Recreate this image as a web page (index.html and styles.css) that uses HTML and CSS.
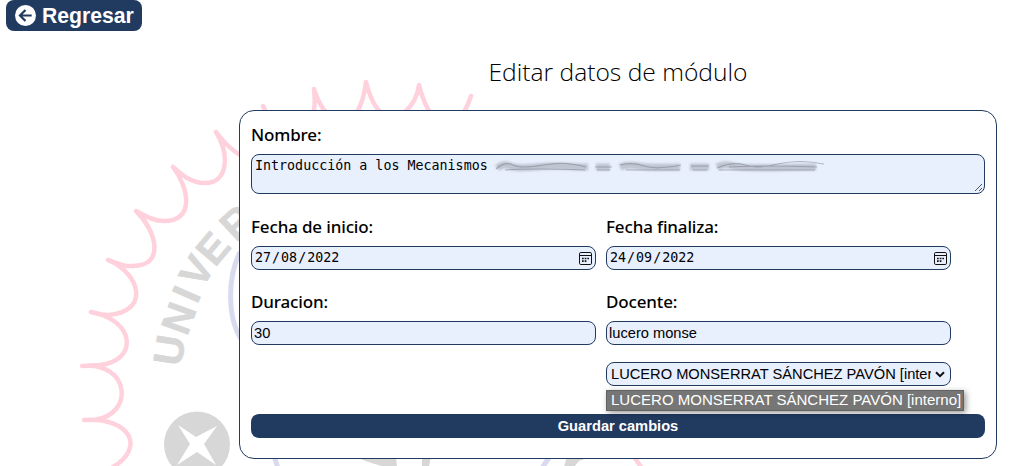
FILE: index.html
```html
<!DOCTYPE html>
<html lang="es">
<head>
<meta charset="utf-8">
<title>Editar datos de módulo</title>
<link rel="stylesheet" href="styles.css">
</head>
<body>
<svg class="seal" viewBox="0 0 1026 466" aria-hidden="true">
  <g class="seal-edge">
    <path d="M471 96Q466 112 455 124Q430 129 419 85Q417 101 405 112Q378 129 366 82Q364 100 357 112Q328 133 314 89Q316 108 312 117Q280 142 263 106M240 155Q228 148 216 132C230 155 228 183 205 183C191 183 182 175 173 167C189 188 195 221 164 221C152 221 144 215 136 211C156 230 166 266 133 266C123 267 117 263 108 260C141 274 150 312 108 315Q100 315 91 312C136 320 138 361 100 365L82 366C130 361 135 415 94 420L84 420C130 417 146 447 113 467"/>
    <path d="M634 457L642 468"/>
  </g>
  <g class="seal-ring"><path d="M240 252C227 278 227 320 243 342M274 456L278 468M550 456L542 468"/></g>
  <g class="seal-word">
    <text transform="translate(181 367) rotate(-81)">U</text>
    <text transform="translate(187 337) rotate(-70)">N</text>
    <text transform="translate(197 305) rotate(-66)">I</text>
    <text transform="translate(202 290) rotate(-60)">V</text>
    <text transform="translate(215 268) rotate(-50)">E</text>
    <text transform="translate(236 243) rotate(-43)">R</text>
  </g>
  <g class="seal-fill">
    <circle cx="197" cy="444.500" r="33"/>
    <path d="M355 456H396L397 467H386Q365 462 355 456ZM422 456H431L429 467H422ZM567 456H593L579 461L574 467H564Z"/>
  </g>
  <path class="seal-star" d="M178 425L196 437L217 426L204 444L216 465L197 452L177 465L190 444Z"/>
</svg>

<button class="back" type="button">
  <svg class="back-icon" viewBox="0 0 22 22" aria-hidden="true"><circle cx="11" cy="11" r="11"/><path d="M17.500 11H6M11 5.200L5.200 11L11 16.800"/></svg>
  <span>Regresar</span>
</button>

<main class="page">
  <h1 class="title"><span>Editar datos de módulo</span></h1>
  <form class="card">
    <label class="label label-name">Nombre:</label>
    <div class="control name-box">
      <span>Introducción a los Mecanismos</span>
      <svg class="smudge" viewBox="0 0 332 16" aria-hidden="true">
        <path class="smudge-wide" d="M4 10Q11 5 17 8T43 9T83 9H95M103 9H117M127 9Q135 6 145 8T187 9M197 9H216M224 9Q232 5 240 8T323 9"/>
        <path class="smudge-line" d="M3 11Q12 3 20 7T50 7T93 9M12 12Q40 10 92 12M102 9H119M104 12H117M127 7Q139 4 151 8T188 7M133 12H187M198 8H216M200 12H214M224 10Q240 3 252 7T285 6T331 6M226 12H322M236 9Q280 7 324 9"/>
      </svg>
      <svg class="grip" viewBox="0 0 9 9" aria-hidden="true"><path d="M1 8L8 1M5 8L8 5"/></svg>
    </div>
    <div class="fields">
      <div class="field">
        <label class="label">Fecha de inicio:</label>
        <div class="control date"><span>27<i>/</i>08<i>/</i>2022</span>
          <svg class="calendar" viewBox="0 0 13 13" aria-hidden="true"><rect x=".5" y=".5" width="12" height="12" rx="1.300"/><path d="M1 3.500H12"/><path class="dots" d="M3 6.500H10M3 9.200H8"/></svg>
        </div>
      </div>
      <div class="field">
        <label class="label">Fecha finaliza:</label>
        <div class="control date"><span>24<i>/</i>09<i>/</i>2022</span>
          <svg class="calendar" viewBox="0 0 13 13" aria-hidden="true"><rect x=".5" y=".5" width="12" height="12" rx="1.300"/><path d="M1 3.500H12"/><path class="dots" d="M3 6.500H10M3 9.200H8"/></svg>
        </div>
      </div>
      <div class="field">
        <label class="label">Duracion:</label>
        <div class="control text">30</div>
      </div>
      <div class="field">
        <label class="label">Docente:</label>
        <div class="control text">lucero monse</div>
        <div class="control select">
          <span class="select-value">LUCERO MONSERRAT SÁNCHEZ PAVÓN [interno]</span>
          <svg class="chevron" viewBox="0 0 10 7" aria-hidden="true"><path d="M1 1.200L5 5.200L9 1.200"/></svg>
          <div class="option"><span>LUCERO MONSERRAT SÁNCHEZ PAVÓN [interno]</span></div>
        </div>
      </div>
    </div>
    <button class="save" type="button">Guardar cambios</button>
  </form>
</main>
</body>
</html>
```
FILE: styles.css
```css
* { box-sizing: border-box; }
body {
  margin: 0;
  height: 466px;
  overflow: hidden;
  position: relative;
  background: #fff;
  color: #000;
  font-family: "Liberation Sans", Arial, sans-serif;
}
.seal { position: absolute; inset: 0; width: 1026px; height: 466px; z-index: -1; }
.seal-edge { fill: none; stroke: #ffd1dc; stroke-width: 4.5; stroke-linejoin: round; stroke-linecap: round; }
.seal-ring { fill: none; stroke: #dadaef; stroke-width: 5; }
.seal-word { fill: #d7d7d7; stroke: #d7d7d7; stroke-width: .6; font: bold 41px "Liberation Sans", sans-serif; }
.seal-fill { fill: #d7d7d7; }
.seal-star { fill: #fff; }
.back {
  display: flex;
  align-items: center;
  gap: 6px;
  width: 136px;
  height: 31px;
  margin-left: 6px;
  padding: 0 0 0 9px;
  border: 0;
  border-radius: 8px;
  background: #213a5f;
  color: #fff;
  font: bold 21.2px "Liberation Sans", Arial, sans-serif;
}
.back-icon { width: 21px; height: 21px; fill: #fff; flex: none; }
.back-icon path { fill: none; stroke: #213a5f; stroke-width: 2.3; }
.page { width: 758px; margin-left: 239px; }
.title {
  height: 79px;
  margin: 0;
  padding-top: 24px;
  text-align: center;
  font: 300 24.6px/34px "Open Sans", "Noto Sans", sans-serif;
}
.card {
  height: 349px;
  padding: 11px 11px 0;
  border: 1px solid #213a5f;
  border-radius: 15px;
  background: #fff;
}
.label { display: block; height: 33px; font: 500 17px/26px "Noto Sans", sans-serif; letter-spacing: -.15px; }
.label-name { height: 32px; }
.control {
  display: flex;
  height: 24px;
  border: 1px solid #213a5f;
  border-radius: 8px;
  background: #e8effd;
  position: relative;
}
.name-box { height: 40px; padding: 3px 3px; font: 13.33px/16px "DejaVu Sans Mono", monospace; white-space: nowrap; }
.smudge { width: 332px; height: 16px; margin-left: 5px; overflow: visible; fill: none; }
.smudge-wide { stroke: #a9afba; stroke-width: 7; filter: blur(1.3px); opacity: .65; }
.smudge-line { stroke: #7e838e; stroke-width: 1.2; filter: blur(.7px); opacity: .55; }
.grip { position: absolute; right: 1px; bottom: 1px; width: 9px; height: 9px; fill: none; stroke: #555; stroke-width: 1; }
.fields { display: grid; grid-template-columns: 345px 345px; column-gap: 10px; padding-top: 20px; }
.field { height: 75px; }
.field .label { height: 32px; }
.date { align-items: center; justify-content: space-between; padding: 0 3px; font: 13.33px/20px "DejaVu Sans Mono", monospace; }
.date i { font-style: normal; padding: 0 1px; }
.calendar { width: 13px; height: 13px; fill: none; stroke: #111; stroke-width: 1; }
.calendar .dots { stroke-width: 1.7; stroke-dasharray: 1.7 1; }
.text { align-items: center; padding: 0 2px; font-size: 14.67px; }
.select {
  align-items: center;
  margin-top: 17px;
  padding: 0 5px 0 4px;
  justify-content: space-between;
  font-size: 14.67px;
  white-space: nowrap;
}
.select-value { width: 320px; overflow: hidden; }
.chevron { width: 10px; height: 7px; flex: none; fill: none; stroke: #111; stroke-width: 2; }
.option {
  position: absolute;
  z-index: 2;
  top: 27px;
  left: -1px;
  width: 358px;
  height: 21px;
  padding-left: 4px;
  border: 1px solid #626262;
  background: #767676;
  color: #fff;
  font-size: 15.02px;
  line-height: 18px;
  box-shadow: 2px 2px 6px rgba(0, 0, 0, .4);
}
.save {
  display: block;
  width: 734px;
  height: 24px;
  margin-top: 50px;
  border: 0;
  border-radius: 8px;
  background: #213a5f;
  color: #fff;
  font: bold 14.67px "Liberation Sans", Arial, sans-serif;
}
```
